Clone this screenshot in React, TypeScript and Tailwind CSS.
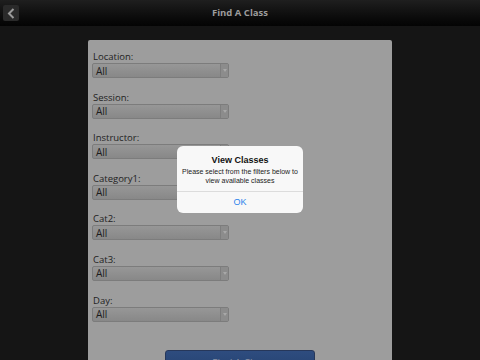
import React from "react";

const fields = ["Location:", "Session:", "Instructor:", "Category1:", "Cat2:", "Cat3:", "Day:"];

function Select() {
  return (
    <div className="flex h-[15px] w-[137px] rounded-[2px] border border-[#7c7c7c] bg-gradient-to-b from-[#979797] to-[#888888]">
      <div className="flex flex-1 items-center pl-[3px] text-[10px] leading-none text-[#1c1c1c]">All</div>
      <div className="flex w-[8px] items-center justify-center border-l border-[#7e7e7e] bg-[#8c8c8c]">
        <svg width="4" height="3" viewBox="0 0 4 3"><path d="M0 0h4L2 3z" fill="#a8a8a8" /></svg>
      </div>
    </div>
  );
}

export default function App() {
  return (
    <div className="relative h-[360px] w-[480px] overflow-hidden bg-[#151515]" style={{ fontFamily: '"Open Sans", "Liberation Sans", sans-serif' }}>
      <div className="relative flex h-[26px] items-center justify-center bg-gradient-to-b from-[#1f1f1f] to-[#040404]">
        <div className="absolute left-[3px] top-[5px] flex h-[16px] w-[16px] items-center justify-center rounded-[2px] bg-[#2a2a2a]">
          <svg width="8" height="11" viewBox="0 0 8 11"><path d="M6.5 1L2 5.5 6.5 10" stroke="#9a9a9a" strokeWidth="2" fill="none" /></svg>
        </div>
        <span className="text-[9.5px] font-bold text-[#9c9c9c]">Find A Class</span>
      </div>
      <div className="ml-[88px] mt-[14px] h-[330px] w-[304px] rounded-t-[2px] bg-[#9d9d9d] px-[4px] pt-[11px]">
        <div className="flex flex-col gap-[13.6px]">
          {fields.map((f) => (
            <div key={f} className="flex flex-col">
              <div className="h-[12px] pl-[1px] text-[9.5px] leading-[12px] text-[#222]">{f}</div>
              <Select />
            </div>
          ))}
        </div>
        <div className="mt-[28px] ml-[73px] flex h-[26px] w-[150px] items-start justify-center rounded-[3px] border border-[#26375a] bg-gradient-to-b from-[#2e4c7f] to-[#24406e] pt-[5px] text-[10px] text-[#8a93a6]">
          Find A Class
        </div>
      </div>
      <div
        className="absolute left-[177px] top-[146px] flex h-[67px] w-[126px] flex-col items-center rounded-[6px] bg-[#f8f8f8]"
        style={{ fontFamily: '"Liberation Sans", Arial, sans-serif' }}
      >
        <div className="mt-[9px] text-[9px] font-bold leading-[10px] text-[#111]">View Classes</div>
        <div className="mt-[3px] text-center text-[7px] leading-[8.5px] text-[#222] whitespace-nowrap">
          <div>Please select from the filters below to</div>
          <div>view available classes</div>
        </div>
        <div className="mt-[6px] h-px w-full bg-[#dcdcdc]" />
        <div className="flex flex-1 items-center text-[9px] text-[#2c84ec]">OK</div>
      </div>
    </div>
  );
}
